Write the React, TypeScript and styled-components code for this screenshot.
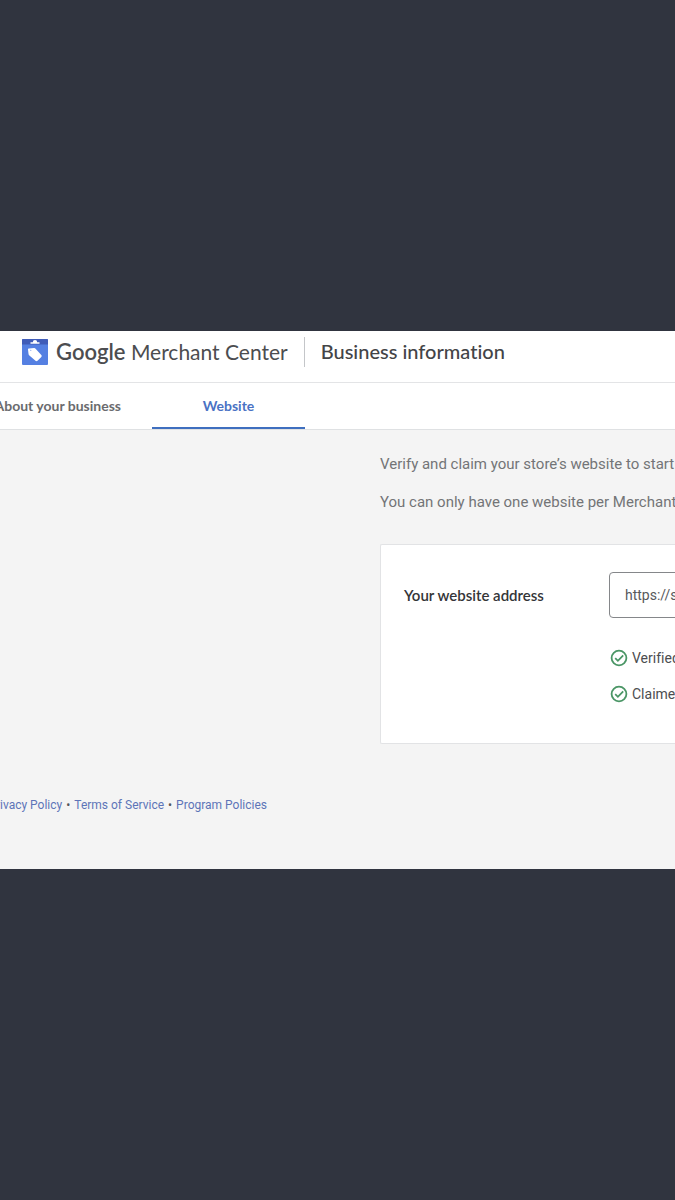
import React from "react";
import styled, { createGlobalStyle } from "styled-components";

const GlobalStyle = createGlobalStyle`
  *, *::before, *::after { box-sizing: border-box; }
  body {
    margin: 0;
    background: #30343f;
    font-family: Roboto, "Liberation Sans", sans-serif;
    font-variant-ligatures: none;
  }
  h1, p, ul { margin: 0; padding: 0; }
`;

const display = `Lato, "Open Sans", sans-serif`;

const Stage = styled.div`
  min-height: 100vh;
  display: flex;
  flex-direction: column;
  justify-content: center;
  overflow: hidden;
`;

const Workspace = styled.div`
  margin-left: -32px;
  background: #f4f4f4;
  white-space: nowrap;
  overflow: hidden;
`;

const Header = styled.header`
  display: flex;
  align-items: flex-start;
  height: 52px;
  padding: 6px 0 0 54px;
  background: #fff;
  border-bottom: 1px solid #e3e4e6;
`;

const Brand = styled.a`
  display: flex;
  align-items: center;
  gap: 8px;
  height: 30px;
  padding-right: 16px;
  border-right: 1px solid #c4c6c9;
  color: #4c4d50;
  font-family: ${display};
  font-size: 21px;
  line-height: 30px;
  text-decoration: none;
`;

const BrandStrong = styled.span`
  font-size: 22px;
  font-weight: 600;
`;

const Title = styled.h1`
  padding-left: 16px;
  color: #434447;
  font-family: ${display};
  font-size: 20px;
  font-weight: 500;
  line-height: 28px;
`;

const Tabs = styled.nav`
  display: flex;
  height: 47px;
  background: #fff;
  border-bottom: 1px solid #dfe1e3;
`;

const Tab = styled.button<{ $active?: boolean }>`
  display: flex;
  align-items: center;
  justify-content: ${(p) => (p.$active ? "center" : "flex-end")};
  width: ${(p) => (p.$active ? 153 : 184)}px;
  height: 46px;
  padding: 2px ${(p) => (p.$active ? 0 : 31)}px 0 0;
  flex: none;
  border: 0;
  border-bottom: 2px solid ${(p) => (p.$active ? "#3f6fbf" : "transparent")};
  background: none;
  color: ${(p) => (p.$active ? "#4a72c4" : "#6a6b6e")};
  font-family: ${display};
  font-size: 14px;
  font-weight: 700;
  line-height: 20px;
`;

const Main = styled.main`
  padding: 24px 0 0 412px;
`;

const Intro = styled.p`
  margin-bottom: 18px;
  color: #737477;
  font-size: 15px;
  line-height: 20px;
`;

const Card = styled.section`
  display: flex;
  align-items: flex-start;
  height: 200px;
  margin-top: 32px;
  padding: 27px 0 0 23px;
  background: #fff;
  border: 1px solid #e2e3e5;
  border-right: 0;
  border-radius: 2px 0 0 2px;
`;

const FieldLabel = styled.label`
  flex: none;
  width: 205px;
  color: #343538;
  font-family: ${display};
  font-size: 15px;
  font-weight: 600;
  line-height: 46px;
`;

const Field = styled.div`
  flex: 1 0 240px;
`;

const AddressInput = styled.input`
  display: block;
  width: 100%;
  height: 46px;
  padding: 0 15px;
  border: 1px solid #85878a;
  border-radius: 4px;
  background: #fff;
  color: #58595c;
  font: 400 14px/20px Roboto, sans-serif;
`;

const StatusList = styled.ul`
  display: grid;
  gap: 16px;
  padding: 30px 0 0 1px;
  list-style: none;
`;

const Status = styled.li`
  display: flex;
  align-items: center;
  gap: 4px;
  color: #4c4d50;
  font-size: 14px;
  line-height: 20px;
`;

const Footer = styled.footer`
  display: flex;
  gap: 4px;
  width: 299px;
  justify-content: flex-end;
  padding: 51px 0 54px;
  color: #55565a;
  font-size: 12px;
  line-height: 20px;
`;

const FooterLink = styled.a`
  color: #5d74b8;
  text-decoration: none;
`;

const MerchantLogo = () => (
  <svg width="26" height="26" viewBox="0 0 26 26" aria-hidden="true">
    <rect width="26" height="26" rx="1" fill="#5580e2" />
    <path d="M1 0h24a1 1 0 0 1 1 1v4.500H0V1a1 1 0 0 1 1-1z" fill="#405cb8" />
    <path d="M8.500 4.800V3.200h2.300a2.200 2.200 0 0 1 4.400 0h2.300v1.600z" fill="#fff" />
    <path
      d="M7 9.500l5.200-.4c.6 0 1 .2 1.400.6l5.700 6.300c.6.700.5 1.400 0 1.900l-3.800 3.800c-.6.600-1.400.6-2 0l-6.400-5.500c-.4-.4-.6-.8-.6-1.400l-.5-4.300c0-.6.400-1 1-1z"
      fill="#fff"
    />
    <circle cx="8.800" cy="11.300" r="0.500" fill="#5580e2" />
  </svg>
);

const CheckIcon = () => (
  <svg width="18" height="18" viewBox="0 0 18 18" fill="none" stroke="#4b9666" strokeWidth="1.800" aria-hidden="true">
    <circle cx="9" cy="9" r="7.400" />
    <path d="M5.200 9.200l2.700 2.600 5.300-5.400" />
  </svg>
);

export default function App() {
  return (
    <Stage>
      <GlobalStyle />
      <Workspace>
        <Header>
          <Brand href="#">
            <MerchantLogo />
            <span>
              <BrandStrong>Google</BrandStrong> Merchant Center
            </span>
          </Brand>
          <Title>Business information</Title>
        </Header>
        <Tabs>
          <Tab type="button">About your business</Tab>
          <Tab type="button" $active>
            Website
          </Tab>
        </Tabs>
        <Main>
          <Intro>Verify and claim your store’s website to start showing products</Intro>
          <Intro>You can only have one website per Merchant Center account</Intro>
          <Card>
            <FieldLabel htmlFor="address">Your website address</FieldLabel>
            <Field>
              <AddressInput id="address" type="text" defaultValue="https://store.example.com" />
              <StatusList>
                <Status>
                  <CheckIcon />
                  Verified
                </Status>
                <Status>
                  <CheckIcon />
                  Claimed
                </Status>
              </StatusList>
            </Field>
          </Card>
        </Main>
        <Footer>
          <FooterLink href="#">Privacy Policy</FooterLink>
          <span>•</span>
          <FooterLink href="#">Terms of Service</FooterLink>
          <span>•</span>
          <FooterLink href="#">Program Policies</FooterLink>
        </Footer>
      </Workspace>
    </Stage>
  );
}
